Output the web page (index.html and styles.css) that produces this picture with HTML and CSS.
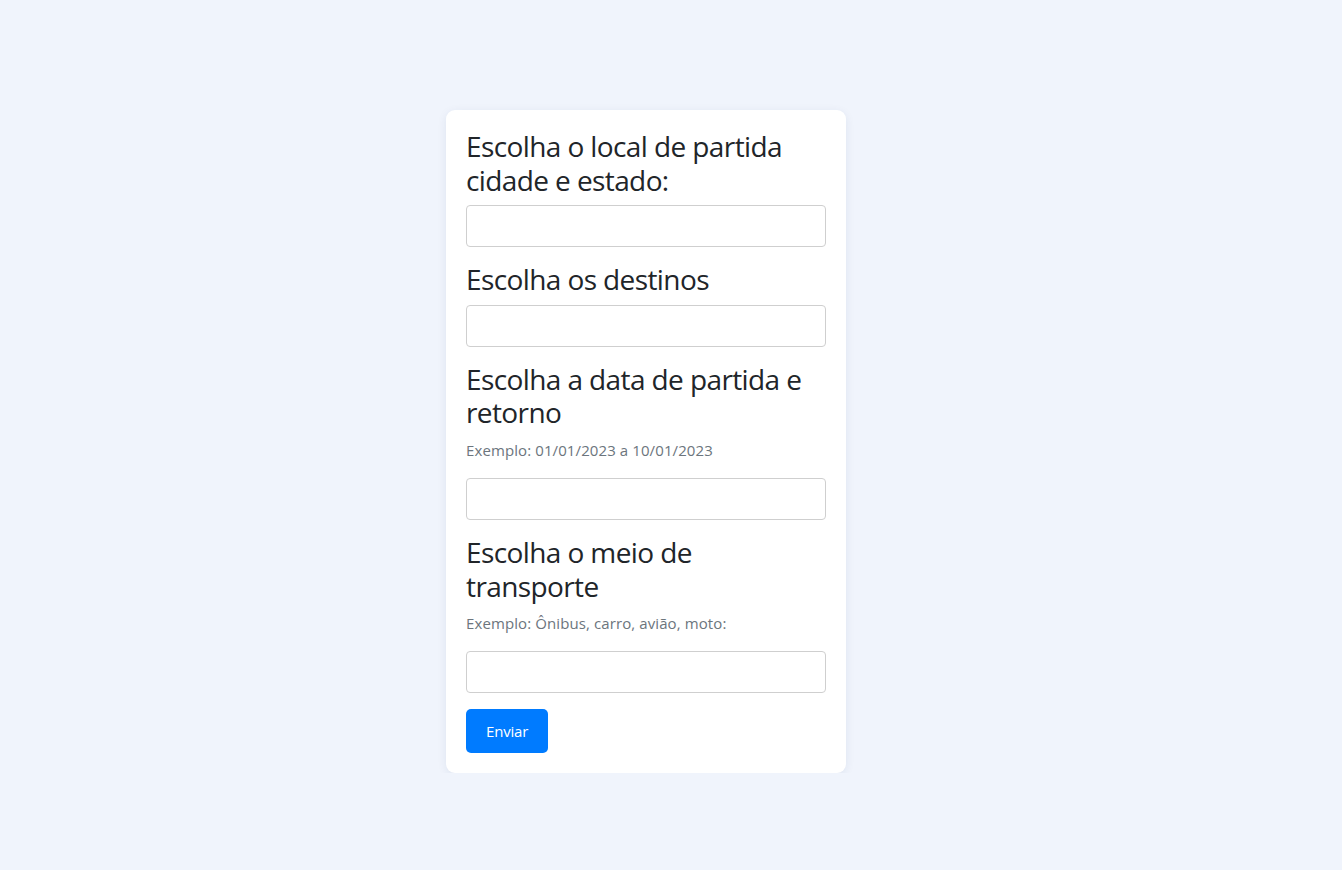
FILE: index.html
```html
<!DOCTYPE html>
<html lang="pt-BR">
<head>
<meta charset="utf-8">
<title>Viagem</title>
<link rel="stylesheet" href="styles.css">
</head>
<body>
<main class="page">
  <form class="card">
    <h3 class="title">Escolha o local de partida cidade e estado:</h3>
    <input class="field" type="text">
    <h3 class="title">Escolha os destinos</h3>
    <input class="field" type="text">
    <h3 class="title">Escolha a data de partida e retorno</h3>
    <p class="hint">Exemplo: 01/01/2023 a 10/01/2023</p>
    <input class="field" type="text">
    <h3 class="title">Escolha o meio de transporte</h3>
    <p class="hint">Exemplo: Ônibus, carro, avião, moto:</p>
    <input class="field" type="text">
    <button class="btn" type="button">Enviar</button>
  </form>
</main>
</body>
</html>
```
FILE: styles.css
```css
html, body {
  margin: 0;
  padding: 0;
}
body {
  background: #f0f4fc;
  font-family: "Open Sans", "Noto Sans", sans-serif;
  color: #212529;
}
.page {
  display: flex;
  justify-content: center;
  padding-top: 110px;
  padding-right: 50px;
}
.card {
  width: 400px;
  box-sizing: border-box;
  background: #ffffff;
  border-radius: 9px;
  padding: 20px;
  box-shadow: 0 2px 10px rgba(30, 50, 100, 0.08);
  display: flex;
  flex-direction: column;
  align-items: flex-start;
}
.title {
  margin: 0 0 8px 0;
  font-size: 28px;
  font-weight: 400;
  line-height: 33.6px;
  letter-spacing: -0.6px;
}
.hint {
  margin: 0 0 16px 0;
  font-size: 15px;
  line-height: 24px;
  color: #6c757d;
  letter-spacing: 0.1px;
}
.field {
  width: 100%;
  height: 42px;
  box-sizing: border-box;
  border: 1px solid #cfcfcf;
  border-radius: 4px;
  margin: 0 0 16px 0;
  padding: 8px 12px;
  font-size: 16px;
  background: #fff;
}
.btn {
  height: 44px;
  padding: 0 20px;
  border: none;
  border-radius: 5px;
  background: #007bff;
  color: #ffffff;
  font-family: "Open Sans", "Noto Sans", sans-serif;
  font-size: 15px;
  letter-spacing: -0.2px;
}
```
